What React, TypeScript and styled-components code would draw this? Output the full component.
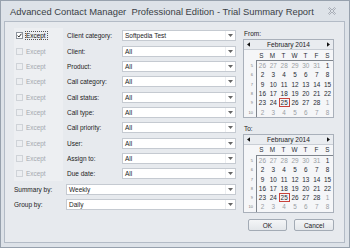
import styled, { createGlobalStyle } from 'styled-components';

const GlobalStyle = createGlobalStyle`
  html, body {
    margin: 0;
    padding: 0;
    background: #dde2e8;
  }
  body {
    font-family: "Liberation Sans", Arial, sans-serif;
  }
`;

const filters = [
  { label: 'Client category:', value: 'Softpedia Test', checked: true },
  { label: 'Client:', value: 'All' },
  { label: 'Product:', value: 'All' },
  { label: 'Call category:', value: 'All' },
  { label: 'Call status:', value: 'All' },
  { label: 'Call type:', value: 'All' },
  { label: 'Call priority:', value: 'All' },
  { label: 'User:', value: 'All' },
  { label: 'Assign to:', value: 'All' },
  { label: 'Due date:', value: 'All' },
];

const weeks = [
  { no: 5, days: [26, 27, 28, 29, 30, 31, 1], muted: [0, 1, 2, 3, 4, 5] },
  { no: 6, days: [2, 3, 4, 5, 6, 7, 8], muted: [] },
  { no: 7, days: [9, 10, 11, 12, 13, 14, 15], muted: [] },
  { no: 8, days: [16, 17, 18, 19, 20, 21, 22], muted: [] },
  { no: 9, days: [23, 24, 25, 26, 27, 28, 1], muted: [6] },
  { no: 10, days: [2, 3, 4, 5, 6, 7, 8], muted: [0, 1, 2, 3, 4, 5, 6] },
];

const dayNames = ['S', 'M', 'T', 'W', 'T', 'F', 'S'];

const Calendar = () => (
  <CalBox>
    <CalHeader>
      <Arrow viewBox="0 0 4 6">
        <path d="M4 0 L0 3 L4 6 Z" fill="#111" />
      </Arrow>
      <span>February 2014</span>
      <Arrow viewBox="0 0 4 6">
        <path d="M0 0 L4 3 L0 6 Z" fill="#111" />
      </Arrow>
    </CalHeader>
    <CalBody>
      <WeekCol>
        {weeks.map((w) => (
          <WeekNo key={w.no}>{w.no}</WeekNo>
        ))}
      </WeekCol>
      <DaysBlock>
        <DayNames>
          {dayNames.map((d, i) => (
            <DayName key={i}>{d}</DayName>
          ))}
        </DayNames>
        <DayGrid>
          {weeks.map((w) =>
            w.days.map((d, i) => (
              <Day
                key={`${w.no}-${i}`}
                $muted={w.muted.includes(i)}
                $today={w.no === 9 && d === 25}
              >
                {d}
              </Day>
            ))
          )}
        </DayGrid>
      </DaysBlock>
    </CalBody>
  </CalBox>
);

const Select = ({ value, wide }: { value: string; wide?: boolean }) => (
  <SelectBox $wide={wide}>
    <SelectText>{value}</SelectText>
    <DropButton>
      <svg width="5" height="3" viewBox="0 0 5 3">
        <path d="M0 0 L5 0 L2.5 3 Z" fill="#666" />
      </svg>
    </DropButton>
  </SelectBox>
);

const App = () => {
  return (
    <>
      <GlobalStyle />
      <Window>
        <TitleBar>
          <Title>Advanced Contact Manager  Professional Edition - Trial Summary Report</Title>
          <svg width="8" height="8" viewBox="0 0 8 8">
            <path
              d="M0.5 1.5 L1.5 0.5 L4 3 L6.5 0.5 L7.5 1.5 L5 4 L7.5 6.5 L6.5 7.5 L4 5 L1.5 7.5 L0.5 6.5 L3 4 Z"
              fill="none"
              stroke="#9aa0a8"
              strokeWidth="0.8"
            />
          </svg>
        </TitleBar>
        <Panel>
          <Form>
            {filters.map((f) => (
              <Row key={f.label}>
                <ExceptCell>
                  <Check $checked={f.checked}>
                    {f.checked && (
                      <svg width="5" height="5" viewBox="0 0 5 5">
                        <path d="M0.6 2.6 L1.9 4 L4.4 0.8" fill="none" stroke="#222" strokeWidth="1" />
                      </svg>
                    )}
                  </Check>
                  <ExceptText $active={f.checked}>Except</ExceptText>
                </ExceptCell>
                <Label>{f.label}</Label>
                <Select value={f.value} />
              </Row>
            ))}
            <Row>
              <Label $indent>Summary by:</Label>
              <Select value="Weekly" wide />
            </Row>
            <Row>
              <Label $indent>Group by:</Label>
              <Select value="Daily" wide />
            </Row>
          </Form>
          <Side>
            <SideLabel>From:</SideLabel>
            <Calendar />
            <SideLabel $gap>To:</SideLabel>
            <Calendar />
            <Buttons>
              <Button>OK</Button>
              <Button $wide>Cancel</Button>
            </Buttons>
          </Side>
        </Panel>
      </Window>
    </>
  );
};

export default App;

const Window = styled.div`
  width: 350px;
  height: 248px;
  box-sizing: border-box;
  border: 1px solid #97a1ad;
  background: #dde2e8;
  display: flex;
  flex-direction: column;
  padding: 0 4px 4px 3px;
`;

const TitleBar = styled.div`
  height: 20px;
  display: flex;
  align-items: center;
  justify-content: space-between;
  padding: 0 9px 0 6px;
`;

const Title = styled.div`
  font-size: 9.4px;
  color: #3a3f46;
  white-space: pre;
`;

const Panel = styled.div`
  flex: 1;
  border: 1px solid #b3bbc6;
  background: #e7eaee;
  display: flex;
  gap: 7px;
  padding: 6px 9px 0 9px;
`;

const Form = styled.div`
  display: grid;
  grid-template-columns: 49px 53px 114px;
  grid-auto-rows: 15.35px;
  column-gap: 3px;
  align-content: start;
`;

const Row = styled.div`
  display: contents;
`;

const ExceptCell = styled.div`
  grid-column: 1;
  display: flex;
  align-items: center;
  gap: 3px;
  padding-left: 2px;
  background: #edeff2;
`;

const Check = styled.span<{ $checked?: boolean }>`
  width: 7px;
  height: 7px;
  box-sizing: border-box;
  border: 1px solid ${(p) => (p.$checked ? '#8c939c' : '#cfd3d8')};
  background: ${(p) => (p.$checked ? '#ffffff' : '#eceef1')};
  display: flex;
  align-items: center;
  justify-content: center;
`;

const ExceptText = styled.span<{ $active?: boolean }>`
  font-size: 6.4px;
  color: ${(p) => (p.$active ? '#111' : '#a4a8ae')};
  outline: ${(p) => (p.$active ? '1px dotted #555' : 'none')};
  outline-offset: 0;
  padding-right: 1px;
`;

const Label = styled.div<{ $indent?: boolean }>`
  grid-column: 2;
  display: flex;
  align-items: center;
  font-size: 6.5px;
  color: #1c1c1c;
  padding-left: 1px;
  ${(p) => p.$indent && 'grid-column: 1; padding-left: 0;'}
`;

const SelectBox = styled.div<{ $wide?: boolean }>`
  grid-column: ${(p) => (p.$wide ? '2 / 4' : '3')};
  align-self: center;
  height: 11px;
  box-sizing: border-box;
  border: 1px solid #c5cad1;
  background: #fff;
  display: flex;
`;

const SelectText = styled.div`
  flex: 1;
  font-size: 6.5px;
  color: #1c1c1c;
  padding-left: 2px;
  display: flex;
  align-items: center;
`;

const DropButton = styled.div`
  width: 9px;
  border-left: 1px solid #eceef1;
  display: flex;
  align-items: center;
  justify-content: center;
`;

const Side = styled.div`
  width: 91px;
  display: flex;
  flex-direction: column;
`;

const SideLabel = styled.div<{ $gap?: boolean }>`
  font-size: 6.5px;
  line-height: 11px;
  color: #1c1c1c;
  padding-left: 1px;
  margin-top: ${(p) => (p.$gap ? '5px' : '0')};
`;

const CalBox = styled.div`
  border: 1px solid #a9b0ba;
  background: #f5f6f8;
`;

const CalHeader = styled.div`
  height: 9px;
  border-bottom: 1px solid #c9ced5;
  background: #e9ecf0;
  display: flex;
  align-items: center;
  justify-content: space-between;
  padding: 0 3px;
  font-size: 6.6px;
  color: #222;
`;

const Arrow = styled.svg`
  width: 3px;
  height: 5px;
`;

const CalBody = styled.div`
  display: flex;
`;

const WeekCol = styled.div`
  width: 12px;
  padding-top: 11px;
  display: flex;
  flex-direction: column;
`;

const WeekNo = styled.div`
  height: 9.3px;
  display: flex;
  align-items: center;
  justify-content: flex-end;
  padding-right: 3px;
  font-size: 4px;
  color: #777;
`;

const DaysBlock = styled.div`
  width: 77px;
`;

const DayNames = styled.div`
  height: 10px;
  display: grid;
  grid-template-columns: repeat(7, 1fr);
`;

const DayName = styled.div`
  display: flex;
  align-items: center;
  justify-content: center;
  font-size: 6.4px;
  color: #2a2e35;
`;

const DayGrid = styled.div`
  display: grid;
  grid-template-columns: repeat(7, 1fr);
  grid-auto-rows: 9.3px;
  border-top: 1px solid #7f858d;
  border-left: 1px solid #7f858d;
`;

const Day = styled.div<{ $muted?: boolean; $today?: boolean }>`
  display: flex;
  align-items: center;
  justify-content: center;
  font-size: 6.4px;
  box-sizing: border-box;
  color: ${(p) => (p.$muted ? '#9a9ea4' : '#262b33')};
  border: 1px solid ${(p) => (p.$today ? '#c8423b' : 'transparent')};
`;

const Buttons = styled.div`
  margin-top: auto;
  margin-bottom: 11px;
  display: flex;
  justify-content: flex-end;
  gap: 7px;
`;

const Button = styled.div<{ $wide?: boolean }>`
  width: ${(p) => (p.$wide ? '40px' : '39px')};
  height: 12px;
  box-sizing: border-box;
  border: 1px solid #a3abb5;
  border-radius: 2px;
  background: linear-gradient(#f4f5f7, #e3e6ea);
  display: flex;
  align-items: center;
  justify-content: center;
  font-size: 6.5px;
  color: #1c1c1c;
`;
